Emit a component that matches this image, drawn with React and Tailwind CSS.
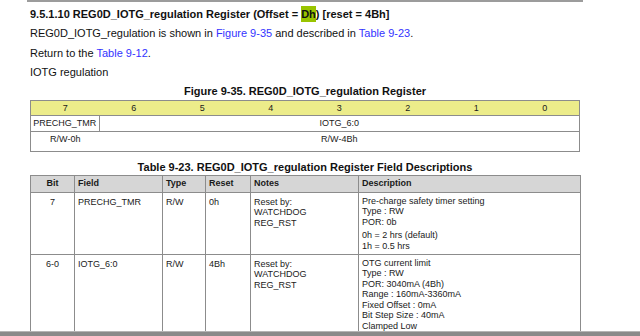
function Link({ children }) {
  return <span className="text-[#3333ff]">{children}</span>;
}

const bits = ["7", "6", "5", "4", "3", "2", "1", "0"];

function App() {
  return (
    <div className="h-[336px] w-[640px] flex flex-col bg-white overflow-hidden font-['Liberation_Sans',Arial,sans-serif] text-[#111]">
      <div className="flex-1 overflow-hidden">
        {/* top rule */}
        <div className="ml-[27px] w-[556px] h-[2px] bg-[#9c9c9c]" />

        <div className="pl-[30px] w-[580px] text-[11px]">
          <h3 className="mt-[2px] leading-[20px] font-bold">
            9.5.1.10 REG0D_IOTG_regulation Register (Offset ={" "}
            <span className="bg-[#99c400] py-[2px]">Dh</span>) [reset = 4Bh]
          </h3>
          <p className="leading-[19.5px]">
            REG0D_IOTG_regulation is shown in <Link>Figure 9-35</Link> and
            described in <Link>Table 9-23</Link>.
          </p>
          <p className="leading-[19.5px]">
            Return to the <Link>Table 9-12</Link>.
          </p>
          <p className="leading-[19.5px]">IOTG regulation</p>

          {/* Figure caption */}
          <p className="text-center font-bold leading-[17px]">
            Figure 9-35. REG0D_IOTG_regulation Register
          </p>

          {/* Register map */}
          <div className="border border-[#8c8c8c] text-[9px] text-[#1a1a1a]">
            <div className="grid grid-cols-8 h-[15px] bg-[#ecec8a] border-b border-[#8c8c8c] leading-[14px]">
              {bits.map((b) => (
                <div key={b} className="text-center">
                  {b}
                </div>
              ))}
            </div>
            <div className="grid grid-cols-8 h-[16px] border-b border-[#8c8c8c] leading-[15px]">
              <div className="border-r border-[#8c8c8c] text-center">
                PRECHG_TMR
              </div>
              <div className="col-span-7 text-center">IOTG_6:0</div>
            </div>
            <div className="grid grid-cols-8 h-[19px] pt-[1px] leading-[12px]">
              <div className="text-center">R/W-0h</div>
              <div className="col-span-7 text-center">R/W-4Bh</div>
            </div>
          </div>

          {/* Table caption */}
          <p className="mt-[7px] text-center font-bold leading-[16px]">
            Table 9-23. REG0D_IOTG_regulation Register Field Descriptions
          </p>

          {/* Field descriptions */}
          <table className="w-[550px] table-fixed border-collapse text-[9px] text-[#1a1a1a] leading-[10.6px]">
            <colgroup>
              <col className="w-[44px]" />
              <col className="w-[88px]" />
              <col className="w-[43px]" />
              <col className="w-[45px]" />
              <col className="w-[108px]" />
              <col className="w-[222px]" />
            </colgroup>
            <thead>
              <tr className="h-[17px] bg-[#d6d6d6] font-bold">
                <th className="border border-[#8c8c8c] text-center">Bit</th>
                <th className="border border-[#8c8c8c] text-left pl-[3px]">Field</th>
                <th className="border border-[#8c8c8c] text-left pl-[3px]">Type</th>
                <th className="border border-[#8c8c8c] text-left pl-[3px]">Reset</th>
                <th className="border border-[#8c8c8c] text-left pl-[3px]">Notes</th>
                <th className="border border-[#8c8c8c] text-left pl-[3px]">Description</th>
              </tr>
            </thead>
            <tbody className="align-top">
              <tr className="h-[62px]">
                <td className="border border-[#8c8c8c] text-center pt-[4px]">7</td>
                <td className="border border-[#8c8c8c] pl-[3px] pt-[4px]">PRECHG_TMR</td>
                <td className="border border-[#8c8c8c] pl-[3px] pt-[4px]">R/W</td>
                <td className="border border-[#8c8c8c] pl-[3px] pt-[4px]">0h</td>
                <td className="border border-[#8c8c8c] pl-[3px] pt-[4px]">
                  Reset by:
                  <br />
                  WATCHDOG
                  <br />
                  REG_RST
                </td>
                <td className="border border-[#8c8c8c] pl-[3px] pt-[3px]">
                  <p>Pre-charge safety timer setting</p>
                  <p>Type : RW</p>
                  <p>POR: 0b</p>
                  <p className="mt-[2.5px]">0h = 2 hrs (default)</p>
                  <p className="mt-[1px]">1h = 0.5 hrs</p>
                </td>
              </tr>
              <tr className="h-[110px]">
                <td className="border border-[#8c8c8c] text-center pt-[4px]">6-0</td>
                <td className="border border-[#8c8c8c] pl-[3px] pt-[4px]">IOTG_6:0</td>
                <td className="border border-[#8c8c8c] pl-[3px] pt-[4px]">R/W</td>
                <td className="border border-[#8c8c8c] pl-[3px] pt-[4px]">4Bh</td>
                <td className="border border-[#8c8c8c] pl-[3px] pt-[4px]">
                  Reset by:
                  <br />
                  WATCHDOG
                  <br />
                  REG_RST
                </td>
                <td className="border border-[#8c8c8c] pl-[3px] pt-[3px]">
                  <p>OTG current limit</p>
                  <p>Type : RW</p>
                  <p>POR: 3040mA (4Bh)</p>
                  <p>Range : 160mA-3360mA</p>
                  <p>Fixed Offset : 0mA</p>
                  <p>Bit Step Size : 40mA</p>
                  <p>Clamped Low</p>
                </td>
              </tr>
            </tbody>
          </table>
        </div>
      </div>

      {/* bottom bar */}
      <div className="h-[5px] bg-[#8a8a8a] border-t border-[#b5b5b5]" />
    </div>
  );
}

export default App;
